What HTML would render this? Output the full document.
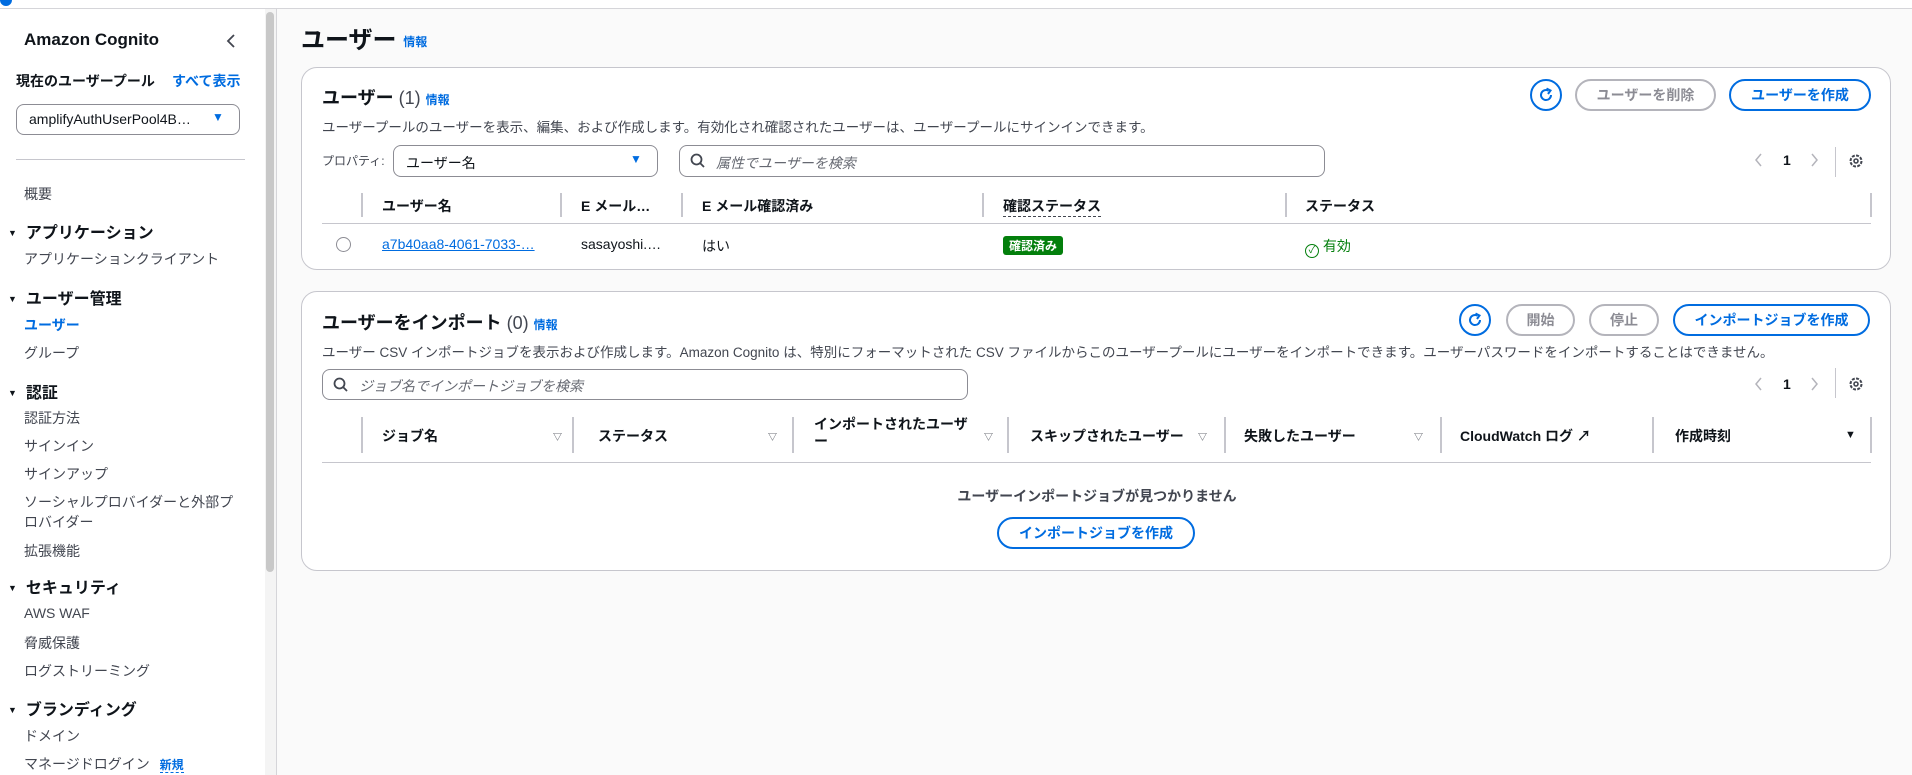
<!DOCTYPE html>
<html><head><meta charset="utf-8"><style>
*{box-sizing:border-box;margin:0;padding:0}
body{width:1912px;height:775px;overflow:hidden;background:#fff;font-family:"Liberation Sans","Noto Sans CJK JP",sans-serif;color:#0f141a;font-size:14px;position:relative}
.a{position:absolute;white-space:nowrap}
.side{position:absolute;left:0;top:9px;width:265px;height:766px;background:#fff}
.main{position:absolute;left:277px;top:9px;width:1635px;height:766px;background:#fafafa}
.card{position:absolute;left:301px;width:1590px;background:#fff;border:1px solid #c6c6cd;border-radius:16px}
.blue{color:#006ce0}
.info{color:#006ce0;font-size:12px;font-weight:bold}
.btn{position:absolute;height:32px;border:2px solid #006ce0;border-radius:16px;color:#006ce0;font-weight:bold;font-size:14px;display:flex;align-items:center;justify-content:center;background:#fff}
.dis{border-color:#b4b4bb;color:#8c8c94}
.rf{position:absolute;width:32px;height:32px;border:2px solid #006ce0;border-radius:50%;display:flex;align-items:center;justify-content:center}
.sep{position:absolute;width:2px;height:24px;background:#c6c6cd}
.nav{position:absolute;left:24px;font-size:14px;color:#424650}
.nh{position:absolute;left:8px;font-size:16px;font-weight:bold;color:#0f141a}
.nh:before{content:"▼";font-size:9px;margin-right:9px;position:relative;top:-2px}
.th{position:absolute;font-weight:bold;font-size:14px;color:#0f141a}
.tri{position:absolute;font-size:9px;color:#424650}
</style></head><body>
<div class="a" style="left:0;top:-6px;width:12px;height:12px;border-radius:50%;background:#006ce0"></div>
<div class="a" style="left:0;top:8px;width:1912px;height:1px;background:#d5d5d9"></div>
<div class="side">
<div class="a" style="left:24px;top:21px;font-size:17px;font-weight:bold">Amazon Cognito</div>
<svg class="a" style="left:225px;top:24px" width="12" height="16"><path d="M9 2 L3 8 L9 14" stroke="#424650" stroke-width="1.8" fill="none"/></svg>
<div class="a" style="left:16px;top:62px;font-size:14px;font-weight:bold">現在のユーザープール</div>
<div class="a blue" style="left:172px;top:62px;font-size:14px;font-weight:bold">すべて表示</div>
<div class="a" style="left:16px;top:95px;width:224px;height:31px;border:1px solid #8c8c94;border-radius:8px;padding:6px 12px;font-size:14px">amplifyAuthUserPool4B…</div>
<div class="a blue" style="left:212px;top:101px;font-size:12px">▼</div>
<div class="a" style="left:16px;top:150px;width:229px;height:1px;background:#c6c6cd"></div>
<div class="nav" style="top:175px">概要</div>
<div class="nh" style="top:210px">アプリケーション</div>
<div class="nav" style="top:240px">アプリケーションクライアント</div>
<div class="nh" style="top:276px">ユーザー管理</div>
<div class="nav" style="top:306px;color:#006ce0;font-weight:bold">ユーザー</div>
<div class="nav" style="top:334px">グループ</div>
<div class="nh" style="top:370px">認証</div>
<div class="nav" style="top:399px">認証方法</div>
<div class="nav" style="top:427px">サインイン</div>
<div class="nav" style="top:455px">サインアップ</div>
<div class="nav" style="top:483px;line-height:20px">ソーシャルプロバイダーと外部プ<br>ロバイダー</div>
<div class="nav" style="top:532px">拡張機能</div>
<div class="nh" style="top:565px">セキュリティ</div>
<div class="nav" style="top:596px">AWS WAF</div>
<div class="nav" style="top:624px">脅威保護</div>
<div class="nav" style="top:652px">ログストリーミング</div>
<div class="nh" style="top:687px">ブランディング</div>
<div class="nav" style="top:717px">ドメイン</div>
<div class="nav" style="top:745px">マネージドログイン <span style="color:#006ce0;font-weight:bold;font-size:12px;border-bottom:1px dashed #006ce0;margin-left:6px">新規</span></div>
</div>
<div class="a" style="left:265px;top:9px;width:11px;height:766px;background:#f4f4f4"></div>
<div class="a" style="left:266px;top:12px;width:8px;height:560px;border-radius:4px;background:#c8c8c8"></div>
<div class="a" style="left:276px;top:9px;width:1px;height:766px;background:#d5d5d9"></div>
<div class="main"></div>

<div class="a" style="left:301px;top:20px;font-size:24px;font-weight:bold">ユーザー <span class="info" style="vertical-align:middle">情報</span></div>

<div class="card" style="top:67px;height:203px"></div>
<div class="a" style="left:322px;top:84px;font-size:18px;font-weight:bold">ユーザー <span style="font-weight:normal;color:#424650">(1)</span> <span class="info">情報</span></div>
<div class="rf" style="left:1530px;top:79px"><svg width="18" height="18" viewBox="0 0 18 18"><path d="M14 9 A5 5 0 1 1 11.5 4.7" stroke="#006ce0" stroke-width="2" fill="none"/><path d="M9.5 2.5 L13.5 4.5 L11 8" stroke="#006ce0" stroke-width="2" fill="none"/></svg></div>
<div class="btn dis" style="left:1575px;top:79px;width:141px">ユーザーを削除</div>
<div class="btn" style="left:1729px;top:79px;width:142px">ユーザーを作成</div>
<div class="a" style="left:322px;top:116px;font-size:13.5px;color:#424650">ユーザープールのユーザーを表示、編集、および作成します。有効化され確認されたユーザーは、ユーザープールにサインインできます。</div>
<div class="a" style="left:322px;top:152px;font-size:12px;color:#424650">プロパティ:</div>
<div class="a" style="left:393px;top:145px;width:265px;height:32px;border:1px solid #8c8c94;border-radius:8px;padding:7px 12px">ユーザー名</div>
<div class="a blue" style="left:630px;top:152px;font-size:12px">▼</div>
<div class="a" style="left:679px;top:145px;width:646px;height:32px;border:1px solid #8c8c94;border-radius:8px;padding:7px 36px;color:#656871;font-style:italic">属性でユーザーを検索</div>
<svg class="a" style="left:690px;top:153px" width="16" height="16"><circle cx="6.5" cy="6.5" r="5" stroke="#424650" stroke-width="1.8" fill="none"/><path d="M10 10 L14 14" stroke="#424650" stroke-width="1.8"/></svg>
<svg class="a" style="left:1754px;top:152px" width="10" height="16"><path d="M7 2 L2 8 L7 14" stroke="#b4b4bb" stroke-width="1.5" fill="none"/></svg>
<div class="a" style="left:1783px;top:152px;font-weight:bold">1</div>
<svg class="a" style="left:1810px;top:152px" width="10" height="16"><path d="M2 2 L7 8 L2 14" stroke="#b4b4bb" stroke-width="1.5" fill="none"/></svg>
<div class="a" style="left:1835px;top:147px;width:1px;height:30px;background:#c6c6cd"></div>
<svg class="a" style="left:1847px;top:152px" width="18" height="18" viewBox="0 0 18 18"><circle cx="9" cy="9" r="5.5" stroke="#424650" stroke-width="2" fill="none" stroke-dasharray="3 1.3"/><circle cx="9" cy="9" r="2" stroke="#424650" stroke-width="1.6" fill="none"/></svg>
<div class="sep" style="left:361px;top:193px"></div><div class="sep" style="left:560px;top:193px"></div><div class="sep" style="left:681px;top:193px"></div><div class="sep" style="left:982px;top:193px"></div><div class="sep" style="left:1285px;top:193px"></div><div class="sep" style="left:1870px;top:193px"></div>
<div class="th" style="left:382px;top:196px">ユーザー名</div>
<div class="th" style="left:581px;top:196px">E メール…</div>
<div class="th" style="left:702px;top:196px">E メール確認済み</div>
<div class="th" style="left:1003px;top:196px;border-bottom:1px dashed #424650">確認ステータス</div>
<div class="th" style="left:1305px;top:196px">ステータス</div>
<div class="a" style="left:322px;top:223px;width:1549px;height:1px;background:#c6c6cd"></div>
<div class="a" style="left:336px;top:237px;width:15px;height:15px;border:1px solid #8c8c94;border-radius:50%"></div>
<div class="a" style="left:382px;top:236px;color:#006ce0;text-decoration:underline">a7b40aa8-4061-7033-…</div>
<div class="a" style="left:581px;top:236px">sasayoshi.…</div>
<div class="a" style="left:702px;top:236px">はい</div>
<div class="a" style="left:1003px;top:236px;background:#037f0c;color:#fff;font-size:12px;font-weight:bold;padding:1px 6px;border-radius:3px">確認済み</div>
<div class="a" style="left:1305px;top:236px;color:#037f0c"><span style="display:inline-block;width:14px;height:14px;border:1.5px solid #037f0c;border-radius:50%;font-size:10px;text-align:center;line-height:11px;vertical-align:-2px">✓</span> 有効</div>

<div class="card" style="top:291px;height:280px"></div>
<div class="a" style="left:322px;top:309px;font-size:18px;font-weight:bold">ユーザーをインポート <span style="font-weight:normal;color:#424650">(0)</span> <span class="info">情報</span></div>
<div class="rf" style="left:1459px;top:304px"><svg width="18" height="18" viewBox="0 0 18 18"><path d="M14 9 A5 5 0 1 1 11.5 4.7" stroke="#006ce0" stroke-width="2" fill="none"/><path d="M9.5 2.5 L13.5 4.5 L11 8" stroke="#006ce0" stroke-width="2" fill="none"/></svg></div>
<div class="btn dis" style="left:1506px;top:304px;width:69px">開始</div>
<div class="btn dis" style="left:1589px;top:304px;width:70px">停止</div>
<div class="btn" style="left:1673px;top:304px;width:197px">インポートジョブを作成</div>
<div class="a" style="left:322px;top:341px;font-size:13.5px;color:#424650">ユーザー CSV インポートジョブを表示および作成します。Amazon Cognito は、特別にフォーマットされた CSV ファイルからこのユーザープールにユーザーをインポートできます。ユーザーパスワードをインポートすることはできません。</div>
<div class="a" style="left:322px;top:369px;width:646px;height:31px;border:1px solid #8c8c94;border-radius:8px;padding:6px 36px;color:#656871;font-style:italic">ジョブ名でインポートジョブを検索</div>
<svg class="a" style="left:333px;top:377px" width="16" height="16"><circle cx="6.5" cy="6.5" r="5" stroke="#424650" stroke-width="1.8" fill="none"/><path d="M10 10 L14 14" stroke="#424650" stroke-width="1.8"/></svg>
<svg class="a" style="left:1754px;top:376px" width="10" height="16"><path d="M7 2 L2 8 L7 14" stroke="#b4b4bb" stroke-width="1.5" fill="none"/></svg>
<div class="a" style="left:1783px;top:376px;font-weight:bold">1</div>
<svg class="a" style="left:1810px;top:376px" width="10" height="16"><path d="M2 2 L7 8 L2 14" stroke="#b4b4bb" stroke-width="1.5" fill="none"/></svg>
<div class="a" style="left:1835px;top:368px;width:1px;height:30px;background:#c6c6cd"></div>
<svg class="a" style="left:1847px;top:375px" width="18" height="18" viewBox="0 0 18 18"><circle cx="9" cy="9" r="5.5" stroke="#424650" stroke-width="2" fill="none" stroke-dasharray="3 1.3"/><circle cx="9" cy="9" r="2" stroke="#424650" stroke-width="1.6" fill="none"/></svg>
<div class="sep" style="left:361px;top:417px;height:36px"></div><div class="sep" style="left:572px;top:417px;height:36px"></div><div class="sep" style="left:792px;top:417px;height:36px"></div><div class="sep" style="left:1007px;top:417px;height:36px"></div><div class="sep" style="left:1224px;top:417px;height:36px"></div><div class="sep" style="left:1440px;top:417px;height:36px"></div><div class="sep" style="left:1652px;top:417px;height:36px"></div><div class="sep" style="left:1870px;top:417px;height:36px"></div>
<div class="th" style="left:382px;top:426px">ジョブ名</div><div class="tri" style="left:553px;top:430px">▽</div>
<div class="th" style="left:598px;top:426px">ステータス</div><div class="tri" style="left:768px;top:430px">▽</div>
<div class="th" style="left:814px;top:416px;line-height:17px">インポートされたユーザ<br>ー</div><div class="tri" style="left:984px;top:430px">▽</div>
<div class="th" style="left:1030px;top:426px">スキップされたユーザー</div><div class="tri" style="left:1198px;top:430px">▽</div>
<div class="th" style="left:1244px;top:426px">失敗したユーザー</div><div class="tri" style="left:1414px;top:430px">▽</div>
<div class="th" style="left:1460px;top:426px">CloudWatch ログ ↗</div>
<div class="th" style="left:1675px;top:426px">作成時刻</div><div class="tri" style="left:1845px;top:429px;color:#0f141a;font-size:11px">▼</div>
<div class="a" style="left:322px;top:462px;width:1549px;height:1px;background:#c6c6cd"></div>
<div class="a" style="left:0;width:2194px;top:486px;text-align:center;font-weight:bold;color:#424650">ユーザーインポートジョブが見つかりません</div>
<div class="btn" style="left:997px;top:517px;width:198px">インポートジョブを作成</div>
</body></html>
